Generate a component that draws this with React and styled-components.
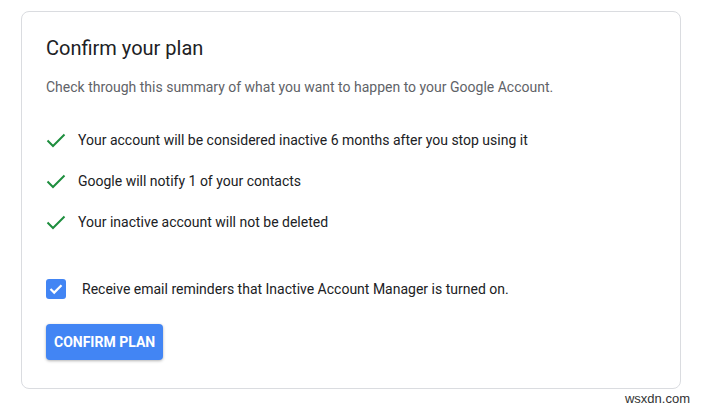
import React from "react"
import styled, { createGlobalStyle } from "styled-components"

const items = [
  "Your account will be considered inactive 6 months after you stop using it",
  "Google will notify 1 of your contacts",
  "Your inactive account will not be deleted",
]

const App = () => {
  return (
    <>
      <GlobalStyle />
      <Page>
        <Card>
          <Title>Confirm your plan</Title>
          <Description>
            Check through this summary of what you want to happen to your Google Account.
          </Description>
          <List>
            {items.map((text) => (
              <Item key={text}>
                <CheckIcon viewBox="0 0 20 16">
                  <polyline points="1.5,8.5 7,14 18.5,2.5" />
                </CheckIcon>
                <span>{text}</span>
              </Item>
            ))}
          </List>
          <CheckRow>
            <Box>
              <svg width="14" height="12" viewBox="0 0 14 12">
                <polyline points="1.5,6 5.2,9.6 12.5,2.2" fill="none" stroke="#fff" strokeWidth="2.2" />
              </svg>
            </Box>
            <span>Receive email reminders that Inactive Account Manager is turned on.</span>
          </CheckRow>
          <Button>CONFIRM PLAN</Button>
        </Card>
        <Watermark>wsxdn.com</Watermark>
      </Page>
    </>
  )
}

export default App

const GlobalStyle = createGlobalStyle`
  body {
    margin: 0;
    background: #fff;
    font-family: Roboto, "Liberation Sans", Arial, sans-serif;
  }
`

const Page = styled.div`
  width: 701px;
  height: 408px;
  padding: 11px 0 0 21px;
  box-sizing: border-box;
  display: flex;
  flex-direction: column;
`

const Card = styled.div`
  width: 660px;
  height: 378px;
  box-sizing: border-box;
  border: 1px solid #dadce0;
  border-radius: 8px;
  padding: 23px 24px 0 24px;
  display: flex;
  flex-direction: column;
  align-items: flex-start;
`

const Title = styled.h1`
  margin: 0;
  font-size: 20px;
  line-height: 26px;
  font-weight: 400;
  color: #202124;
`

const Description = styled.p`
  margin: 16px 0 0;
  font-size: 14px;
  line-height: 20px;
  color: #5f6368;
`

const List = styled.div`
  margin-top: 31px;
  display: flex;
  flex-direction: column;
  gap: 17px;
`

const Item = styled.div`
  display: flex;
  align-items: center;
  gap: 12px;
  height: 24px;
  font-size: 14px;
  color: #202124;
`

const CheckIcon = styled.svg`
  width: 20px;
  height: 16px;
  fill: none;
  stroke: #1e8e3e;
  stroke-width: 2;
`

const CheckRow = styled.div`
  margin-top: 43px;
  display: flex;
  align-items: center;
  gap: 16px;
  height: 24px;
  font-size: 14px;
  color: #202124;
`

const Box = styled.div`
  width: 20px;
  height: 20px;
  border-radius: 3px;
  background: #4285f4;
  display: flex;
  align-items: center;
  justify-content: center;
`

const Button = styled.button`
  margin-top: 23px;
  height: 36px;
  padding: 0 8px;
  border: none;
  border-radius: 4px;
  background: #4285f4;
  color: #fff;
  font-family: Roboto, "Liberation Sans", Arial, sans-serif;
  font-size: 14px;
  font-weight: 700;
  box-shadow: 0 1px 3px rgba(0, 0, 0, 0.3);
`

const Watermark = styled.div`
  align-self: flex-end;
  margin: 2px 11px 0 0;
  font-family: "Liberation Sans", Arial, sans-serif;
  font-size: 13px;
  color: #333;
`
